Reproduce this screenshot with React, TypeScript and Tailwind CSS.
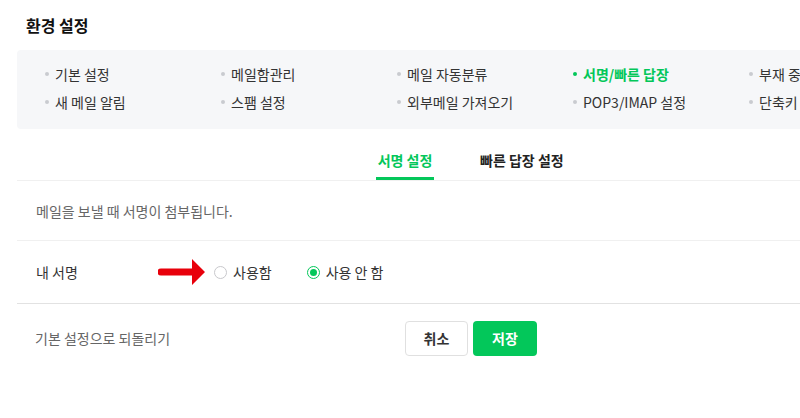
import React from 'react';

const MENU = [
  ['기본 설정', '메일함관리', '메일 자동분류', '서명/빠른 답장', '부재 중 자동응답'],
  ['새 메일 알림', '스팸 설정', '외부메일 가져오기', 'POP3/IMAP 설정', '단축키'],
];

const ACTIVE = '서명/빠른 답장';

const font = { fontFamily: '"Noto Sans CJK KR", "Noto Sans", sans-serif' };

const Radio = ({ checked, label }: { checked?: boolean; label: string }) => (
  <label className="flex items-center gap-[6px] text-[14px] text-[#333]">
    <span
      className={
        checked
          ? 'w-[13px] h-[13px] rounded-full border border-[#03c75a] flex items-center justify-center'
          : 'w-[13px] h-[13px] rounded-full border border-[#c8c8cc]'
      }
    >
      {checked && <span className="w-[7px] h-[7px] rounded-full bg-[#03c75a]" />}
    </span>
    {label}
  </label>
);

export default function App() {
  return (
    <div className="w-screen overflow-hidden bg-white" style={font}>
      <div className="w-[940px] pl-[17px]">
        <div className="h-[50px] flex items-center pl-[9px] text-[16px] font-bold text-[#111]">환경 설정</div>

        <div className="bg-[#f6f7f9] rounded-[4px] pl-[28px] pt-[10px] pb-[13px]">
          {MENU.map((row, r) => (
            <div key={r} className="grid grid-cols-[repeat(5,176px)] h-[28px] items-center">
              {row.map((item) => {
                const on = item === ACTIVE;
                return (
                  <div key={item} className="flex items-center gap-[6px] text-[14px] whitespace-nowrap">
                    <span className={on ? 'w-[4px] h-[4px] rounded-full bg-[#03c75a]' : 'w-[4px] h-[4px] rounded-full bg-[#c9cbd0]'} />
                    <span className={on ? 'text-[#03c75a] font-bold' : 'text-[#333]'}>{item}</span>
                  </div>
                );
              })}
            </div>
          ))}
        </div>

        <div className="flex border-b border-[#f0f0f0] pl-[359px] gap-[46px] pt-[21px]">
          <div className="w-[58px] text-center pb-[7px] border-b-[3px] border-[#03c75a] text-[14px] leading-[20px] font-bold text-[#03c75a]">서명 설정</div>
          <div className="pb-[10px] text-[14px] leading-[20px] font-bold text-[#222]">빠른 답장 설정</div>
        </div>

        <div className="h-[60px] flex items-center pl-[19px] pt-[2px] border-b border-[#f0f0f0] text-[14px] text-[#666]">
          메일을 보낼 때 서명이 첨부됩니다.
        </div>

        <div className="h-[63px] flex items-center pl-[19px] pt-[1px] border-b border-[#e2e2e2]">
          <div className="w-[122px] text-[14px] text-[#333]">내 서명</div>
          <svg width="48" height="28" viewBox="0 0 48 28" className="mt-[-2px]">
            <path d="M3 10.5 H34 V1 L47 14 L34 27 V17.5 H3 A3.5 3.5 0 0 1 3 10.5 Z" fill="#e8000b" />
          </svg>
          <div className="ml-[8px]">
            <Radio label="사용함" />
          </div>
          <div className="ml-[35px]">
            <Radio checked label="사용 안 함" />
          </div>
        </div>

        <div className="flex items-center pt-[17px] pl-[18px]">
          <div className="w-[370px] text-[14px] text-[#666]">기본 설정으로 되돌리기</div>
          <button className="w-[63px] h-[35px] rounded-[4px] border border-[#e0e0e0] bg-white text-[14px] font-bold text-[#333]">취소</button>
          <button className="ml-[5px] w-[64px] h-[35px] rounded-[4px] bg-[#03c75a] text-[14px] font-bold text-white">저장</button>
        </div>
      </div>
    </div>
  );
}
